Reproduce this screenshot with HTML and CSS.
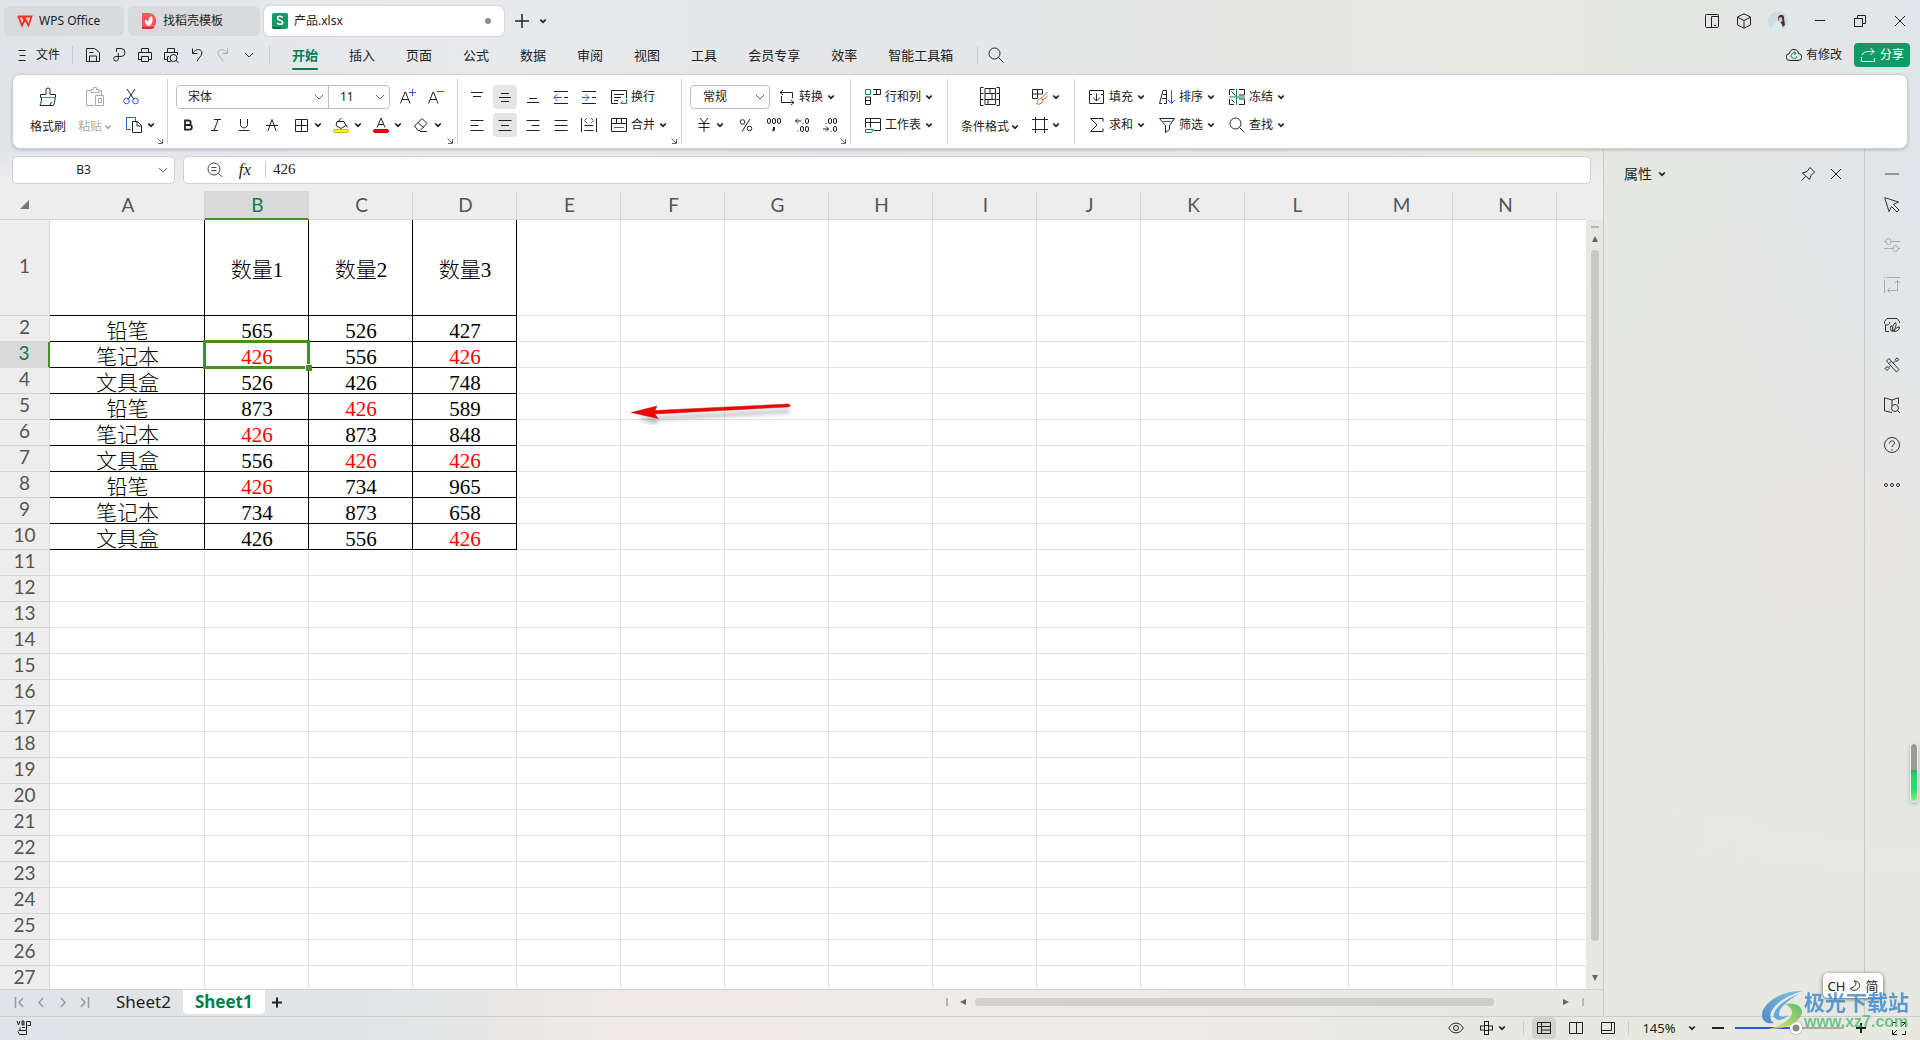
FILE: index.html
```html
<!DOCTYPE html>
<html lang="zh-CN">
<head>
<meta charset="utf-8">
<title>产品.xlsx - WPS Office</title>
<link rel="stylesheet" href="styles.css">
</head>
<body>
<svg class="defs" aria-hidden="true">
  <symbol id="chev" viewBox="0 0 8 8"><path d="M1.2 2.5 4 5.2 6.8 2.5" stroke-width="1.7"/></symbol>
  <symbol id="chev-thin" viewBox="0 0 10 10"><path d="M1 3l4 4 4-4"/></symbol>
  <symbol id="launch" viewBox="0 0 6 6"><path d="M.5.5 5 5M5.5 1v4.5H1"/></symbol>
  <symbol id="close" viewBox="0 0 16 16"><path d="M3 3l10 10M13 3 3 13"/></symbol>
  <symbol id="search" viewBox="0 0 16 16"><circle cx="6.5" cy="6.5" r="5.5"/><path d="m10.5 10.5 5 5"/></symbol>
</svg>

<header class="titlebar">
  <nav class="doc-tabs">
    <button class="doc-tab home"><svg class="i" viewBox="0 0 16 16"><path d="M.5 3.500H14.500L11.500 12.500 8 5.500 5 12.500 1.500 3.500M5.500 3.500 8.500 9" stroke="#f5321e" stroke-width="1.800"/></svg>WPS Office</button>
    <button class="doc-tab store"><svg class="i" viewBox="0 0 16 16"><path d="M1 0h7a7 7 0 0 1 7 7v2a7 7 0 0 1-7 7H1z" fill="#f35757" stroke="none"/><path d="M1 14h13l-3 2H1z" fill="#cf2f35" stroke="none"/><path d="M8 13C4 12 4 9 4 7c2 0 3 1 3.500 3C7 7 8 4 11 3c1 4 1 8-3 10z" fill="#fff" stroke="none"/></svg>找稻壳模板</button>
    <button class="doc-tab active"><svg class="i" viewBox="0 0 16 16"><rect width="16" height="16" rx="2" fill="#129a68" stroke="none"/><path d="M0 14h9v2H1z" fill="#0a6b45" stroke="none"/><path d="M10.800 4.500C9 2.500 5.500 3 5.500 5.200c0 2.600 5.200 1.500 5.200 4.200 0 2.200-3.700 2.600-5.600.6" stroke="#fff" stroke-width="1.600"/></svg><span class="name">产品.xlsx</span><span class="unsaved"></span></button>
    <button class="icon-btn new-tab" aria-label="新建"><svg class="i" viewBox="0 0 16 16"><path d="M8 1v14M1 8h14" stroke-width="1.500"/></svg></button>
    <button class="icon-btn tab-list" aria-label="标签列表"><svg class="c"><use href="#chev"/></svg></button>
  </nav>
  <div class="window-tools">
    <button class="icon-btn" aria-label="侧边"><svg class="i" viewBox="0 0 16 16"><rect x="1.500" y="1.500" width="13" height="13" rx="1"/><path d="M7.500 14.500v-11h7M10 12.500h2"/></svg></button>
    <button class="icon-btn" aria-label="应用"><svg class="i" viewBox="0 0 16 16"><path d="M8 .8 14.500 4v8L8 15.200 1.500 12V4zM2 4.500l6 3 6-3M8 7.500V15"/></svg></button>
    <button class="icon-btn avatar-btn" aria-label="账户"><svg class="avatar" viewBox="0 0 20 20"><circle cx="10" cy="10" r="10" fill="#cfdbe4"/><path d="M4 18c1-5 3-8 7-8l4 3-1 6a10 10 0 0 1-10-1z" fill="#dceaf0"/><path d="M10 6c2-3 6-3 6 1l1 7-2 2-2-4-3-3z" fill="#3c3540"/><path d="M10.500 7l3-1 1 4-3 2z" fill="#e9c5b5"/></svg></button>
    <button class="icon-btn win" aria-label="最小化"><svg class="i" viewBox="0 0 16 16"><path d="M3 7.500h10"/></svg></button>
    <button class="icon-btn win" aria-label="还原"><svg class="i" viewBox="0 0 16 16"><rect x="2.500" y="5.500" width="8" height="8"/><path d="M5.500 5.500v-3h8v8h-3"/></svg></button>
    <button class="icon-btn win" aria-label="关闭"><svg class="i"><use href="#close"/></svg></button>
  </div>
</header>

<div class="menubar">
  <button class="file-btn"><svg class="i" viewBox="0 0 16 16"><path d="M4.500 3.500h7M5.500 8.500h6M4.500 13.500h7"/></svg>文件</button>
  <span class="vsep"></span>
  <div class="quick">
    <button class="icon-btn" aria-label="保存"><svg class="i" viewBox="0 0 16 16"><path d="M1.500 1.500h8l5 4v9h-13zM4.500 14v-5h7v5M4.500 5.500h4"/></svg></button>
    <button class="icon-btn" aria-label="输出"><svg class="i" viewBox="0 0 16 16"><path d="M5.500 5V1.500h4.500a4 4 0 0 1 0 8H5a2.300 2.300 0 1 0 2.300 2.500V6"/></svg></button>
    <button class="icon-btn" aria-label="打印"><svg class="i" viewBox="0 0 16 16"><path d="M4.500 5V1.500h7V5M4 12.500H1.500v-7h13v7H12M4.500 9.500h7v5h-7z"/></svg></button>
    <button class="icon-btn" aria-label="打印预览"><svg class="i" viewBox="0 0 16 16"><path d="M4.500 5V1.500h7V5M4 12.500H1.500v-7h13V8M6 9.500H4.500v5H8"/><circle cx="10.500" cy="11" r="3.500"/><path d="m13 13.500 2.500 2"/></svg></button>
    <button class="icon-btn" aria-label="撤销"><svg class="i" viewBox="0 0 16 16"><path d="M3.500 1.500v5h5M4 6c3-5 9-4 9 0 0 3-4 5-5 8.500"/></svg></button>
    <button class="icon-btn dim" aria-label="恢复"><svg class="i" viewBox="0 0 16 16"><path d="M12.500 1.500v5h-5M12 6C9 1 3 2 3 6c0 3 4 5 5 8.500"/></svg></button>
    <button class="icon-btn more" aria-label="更多"><svg class="c10"><use href="#chev-thin"/></svg></button>
  </div>
  <span class="vsep"></span>
  <nav class="menu">
    <a href="#" class="on">开始</a><a href="#">插入</a><a href="#">页面</a><a href="#">公式</a><a href="#">数据</a><a href="#">审阅</a><a href="#">视图</a><a href="#">工具</a><a href="#">会员专享</a><a href="#">效率</a><a href="#">智能工具箱</a>
  </nav>
  <span class="vsep"></span>
  <button class="icon-btn find" aria-label="搜索"><svg class="i"><use href="#search"/></svg></button>
  <div class="share-area">
    <button class="plain"><svg class="i" viewBox="0 0 16 16"><path d="M4 13.500a3.500 3.500 0 0 1-.5-7C4 1 12 1 12.500 6.500a3.500 3.500 0 0 1-.5 7z"/><path d="M9.500 6.200A2.800 2.800 0 1 0 10.800 9M8.500 4.500l1.500 2-2 1" stroke="#0a8a55"/></svg>有修改</button>
    <button class="share"><svg class="i" viewBox="0 0 16 16"><path d="M1.500 10v4.500h13V11M2 8c1-3 5-4 12-3.500M10.500 1 14 4.500 10.500 8"/></svg>分享</button>
  </div>
</div>

<section class="ribbon">
  <div class="group clip">
    <button class="big"><svg class="i20" viewBox="0 0 20 20"><path d="M8 7.500V3a2 2 0 0 1 4 0v4.500h5.500v3h-15v-3zM3.500 11c0 3-.5 5-1.500 7.500h13.500c1-2 1.500-5 1.500-7.500M12 18l1.500-3"/><path d="M3 10.500h14" stroke="#d4622a"/></svg>格式刷</button>
    <button class="big dim"><svg class="i20" viewBox="0 0 20 20"><path d="M6 3.500H1.500v15H9M14 3.500h2.500V8M6 5.500v-3h2.500v-2h3v2H14v3zM10.500 8.500h8v10h-8zM13.500 11.500h3v4h-3z"/></svg><span class="lbl">粘贴<svg class="c"><use href="#chev"/></svg></span></button>
    <div class="rows">
      <button class="split solo" aria-label="剪切"><svg class="i" viewBox="0 0 16 16"><path d="M4 0l7 10.500M12 0 5 10.500"/><circle cx="3.500" cy="12" r="2.800" stroke="#2c5bdc"/><circle cx="12.500" cy="12" r="2.800" stroke="#2c5bdc"/></svg></button>
      <button class="split" aria-label="复制"><svg class="i" viewBox="0 0 16 16"><path d="M9.500 4V.5h-9v12H5" stroke="#2c5bdc"/><path d="M6.500 4.500h5l4 4v7h-9zM11 5v4h4"/></svg><svg class="c"><use href="#chev"/></svg></button>
    </div>
    <svg class="launch"><use href="#launch"/></svg>
  </div>

  <div class="group font">
    <div class="rows">
      <div class="row boxes">
        <div class="combo"><label><select class="font-name" aria-label="字体"><option>宋体</option></select><svg class="c10"><use href="#chev-thin"/></svg></label><label><select class="font-size" aria-label="字号"><option>11</option></select><svg class="c10"><use href="#chev-thin"/></svg></label></div>
        <button class="cell" aria-label="增大字号"><svg class="i" viewBox="0 0 16 16"><path d="M.5 14.500 5 3h.5L10 14.500M2 10.500h6.500"/><path d="M12.500 0v7M9 3.500h7" stroke="#2c5bdc"/></svg></button>
        <button class="cell" aria-label="减小字号"><svg class="i" viewBox="0 0 16 16"><path d="M.5 14.500 5 3h.5L10 14.500M2 10.500h6.500"/><path d="M9 2.500h7" stroke="#2c5bdc"/></svg></button>
      </div>
      <div class="row marks">
        <button class="cell" aria-label="加粗"><svg class="i" viewBox="0 0 16 16"><path d="M5 3.500h4a2.300 2.300 0 0 1 0 4.500H5zM5 8h4.500a2.300 2.300 0 0 1 0 4.700H5z" stroke-width="1.800"/></svg></button>
        <button class="cell" aria-label="倾斜"><svg class="i" viewBox="0 0 16 16"><path d="M6 2.500h7M3 13.500h7M10 3 6 13.500"/></svg></button>
        <button class="cell" aria-label="下划线"><svg class="i" viewBox="0 0 16 16"><path d="M4.500 2v5.500c0 4.500 7 4.500 7 0V2M3 13.500h10"/></svg></button>
        <button class="cell" aria-label="删除线"><svg class="i" viewBox="0 0 16 16"><path d="M4 14 8 2.500 12 14M2 8.500h12"/></svg></button>
        <button class="split" aria-label="边框"><svg class="i" viewBox="0 0 16 16"><path d="M2.500 2.500h12v12h-12zM8.500 2.500v12M2.500 8.500h12"/></svg><svg class="c"><use href="#chev"/></svg></button>
        <button class="split" aria-label="填充颜色"><svg class="i" viewBox="0 0 16 16"><path d="M5 4.500 8.500 1M4 4.500h7l2 4-5 3-5-3zM13 8l1.500 2.500" /><rect x=".5" y="12.500" width="15" height="3" rx="1.500" fill="#fffb00" stroke="#c6bd00"/></svg><svg class="c"><use href="#chev"/></svg></button>
        <button class="split" aria-label="字体颜色"><svg class="i" viewBox="0 0 16 16"><path d="M4 10.500 8 1l4 9.500M5.500 7.500h5"/><rect x=".5" y="12.500" width="15" height="3" rx="1.500" fill="#f00" stroke="#c80000"/></svg><svg class="c"><use href="#chev"/></svg></button>
        <button class="split" aria-label="清除"><svg class="i" viewBox="0 0 16 16"><path d="M1.500 9 9 1.500l5 5-7 7H5zM5 5.500l5.500 5M7 14.500h7"/></svg><svg class="c"><use href="#chev"/></svg></button>
      </div>
    </div>
    <svg class="launch"><use href="#launch"/></svg>
  </div>

  <div class="group align">
    <div class="rows">
      <div class="row">
        <button class="cell" aria-label="顶端对齐"><svg class="i" viewBox="0 0 16 16"><path d="M2 3.500h12M4 7.500h8"/></svg></button>
        <button class="cell" aria-label="垂直居中"><span class="pressed"><svg class="i" viewBox="0 0 16 16"><path d="M4 4.500h8M2 8.500h12M4 12.500h8"/></svg></span></button>
        <button class="cell" aria-label="底端对齐"><svg class="i" viewBox="0 0 16 16"><path d="M4 9.500h8M2 13.500h12"/></svg></button>
        <button class="cell" aria-label="减少缩进"><svg class="i" viewBox="0 0 16 16"><path d="M1 2.500h14M11 8.500h4M1 14.500h14"/><path d="M9 8.500H1M4.500 5 1 8.500 4.500 12" stroke="#2c5bdc"/></svg></button>
        <button class="cell" aria-label="增加缩进"><svg class="i" viewBox="0 0 16 16"><path d="M1 2.500h14M11 8.500h4M1 14.500h14"/><path d="M1 8.500h7M4.500 5 8 8.500 4.500 12" stroke="#2c5bdc"/></svg></button>
        <button class="text-btn"><svg class="i" viewBox="0 0 16 16"><path d="M15.500 9V1.500H.5v13H7M3 5.500h10M3 8.500h7M3 11.500h4"/><path d="M15.500 10v4.500H10M12 12l-2.500 2.500" stroke="#0a8a55"/></svg>换行</button>
      </div>
      <div class="row">
        <button class="cell" aria-label="左对齐"><svg class="i" viewBox="0 0 16 16"><path d="M1.500 3.500h13M1.500 8.500h8M1.500 13.500h13"/></svg></button>
        <button class="cell" aria-label="居中"><span class="pressed"><svg class="i" viewBox="0 0 16 16"><path d="M1.500 3.500h13M4 8.500h8M1.500 13.500h13"/></svg></span></button>
        <button class="cell" aria-label="右对齐"><svg class="i" viewBox="0 0 16 16"><path d="M1.500 3.500h13M6.500 8.500h8M1.500 13.500h13"/></svg></button>
        <button class="cell" aria-label="两端对齐"><svg class="i" viewBox="0 0 16 16"><path d="M1.500 3.500h13M1.500 8.500h13M1.500 13.500h13"/></svg></button>
        <button class="cell" aria-label="分散对齐"><svg class="i" viewBox="0 0 16 16"><path d="M.5 1v14M15.500 1v14M3.500 8.500h9M3.500 13.500h9"/><path d="M6 1 3.500 3.500 6 6M10 1l2.500 2.500L10 6" stroke="#2c5bdc"/></svg></button>
        <button class="text-btn"><svg class="i" viewBox="0 0 16 16"><path d="M.5 1.500h15v13H.5zM.5 6.500h15M5.500 1.500v5M10.500 1.500v5"/><path d="M3 10.500h10" stroke="#0a8a55"/></svg>合并<svg class="c"><use href="#chev"/></svg></button>
      </div>
    </div>
    <svg class="launch"><use href="#launch"/></svg>
  </div>

  <div class="group number">
    <div class="rows">
      <div class="row boxes">
        <div class="combo"><label><select class="num-format" aria-label="数字格式"><option>常规</option></select><svg class="c10"><use href="#chev-thin"/></svg></label></div>
        <button class="text-btn conv"><svg class="i" viewBox="0 0 16 16"><path d="M4 1 1 3.500 4 6M1 3.500h12.500V9M2.500 7v6.500H15M12 11l3 2.500-3 2.500"/></svg>转换<svg class="c"><use href="#chev"/></svg></button>
      </div>
      <div class="row">
        <button class="split yen" aria-label="货币"><svg class="i" viewBox="0 0 16 16"><path d="M4 1l4 5 4-5M2.500 6.500h11M2.500 10.500h11M8 6v9"/></svg><svg class="c"><use href="#chev"/></svg></button>
        <button class="cell" aria-label="百分比"><svg class="i" viewBox="0 0 16 16"><circle cx="4.500" cy="5" r="2.300"/><circle cx="11.500" cy="11.500" r="2.300"/><path d="M12 2 4 14.500"/></svg></button>
        <button class="cell" aria-label="千位分隔"><svg class="i" viewBox="0 0 16 16"><rect x="1.500" y="1.500" width="3" height="5" rx="1.500"/><rect x="6.500" y="1.500" width="3" height="5" rx="1.500"/><rect x="11.500" y="1.500" width="3" height="5" rx="1.500"/><path d="M8 10v2l-1 2" stroke-width="2"/></svg></button>
        <button class="cell" aria-label="增加小数"><svg class="i" viewBox="0 0 16 16"><path d="M7 4H1.500M4 1.500 1.500 4 4 6.500M9 6v1M4 13.500v1"/><rect x="11.500" y="1.500" width="3" height="5" rx="1.500"/><rect x="6.500" y="9.500" width="3" height="5" rx="1.500"/><rect x="11.500" y="9.500" width="3" height="5" rx="1.500"/></svg></button>
        <button class="cell" aria-label="减少小数"><svg class="i" viewBox="0 0 16 16"><path d="M1 12h5.500M4 9.500 6.500 12 4 14.500M4 6v1M9 13.500v1"/><rect x="6.500" y="1.500" width="3" height="5" rx="1.500"/><rect x="11.500" y="1.500" width="3" height="5" rx="1.500"/><rect x="11.500" y="9.500" width="3" height="5" rx="1.500"/></svg></button>
      </div>
    </div>
    <svg class="launch"><use href="#launch"/></svg>
  </div>

  <div class="group sheet-ops">
    <div class="rows">
      <button class="text-btn"><svg class="i" viewBox="0 0 16 16"><path d="M.5 .5h5v5h-5z" stroke="#0a8a55"/><path d="M8 .5h7.500v5H8M11.500.5v5M.5 8v7.500h5V8zM.5 11.500h5"/></svg>行和列<svg class="c"><use href="#chev"/></svg></button>
      <button class="text-btn"><svg class="i" viewBox="0 0 16 16"><path d="M9 13.500h6.500v-12H.5v9M.5 5.500h15M5.500 1.500v9"/><path d="M.5 12.500h8l-2 3h-6z" stroke="#0a8a55"/></svg>工作表<svg class="c"><use href="#chev"/></svg></button>
    </div>
  </div>

  <div class="group format">
    <button class="big wide"><svg class="i20" viewBox="0 0 20 20"><path d="M3.500.5h-3v18h3M16.500.5h3v18h-3M.5 6.500h3M.5 12.500h3M16.500 6.500h3M16.500 12.500h3M5 1.500h10.500v5H5zM5 6.500v6h10.500v-6M5 12.500v5h10.500v-5M10 1.500v5M12 6.500v6M8 12.500v5"/></svg><span class="lbl">条件格式<svg class="c"><use href="#chev"/></svg></span></button>
    <div class="rows">
      <button class="split" aria-label="表格样式"><svg class="i" viewBox="0 0 16 16"><path d="M10.500 5V.5H.5v9h5M.5 5h10M5.500.5v9"/><path d="M15.500 3 9 9.500M15.500 7l-5 4.500M5 15c0-4 2-5.500 4-5.500s2.500 2.500 1 4S7 15.500 5 15z" stroke="#d4622a"/></svg><svg class="c"><use href="#chev"/></svg></button>
      <button class="split" aria-label="单元格样式"><svg class="i" viewBox="0 0 16 16"><path d="M3.500 0v16M12.500 0v16M0 2.500h16M0 12.500h16"/></svg><svg class="c"><use href="#chev"/></svg></button>
    </div>
  </div>

  <div class="group edit">
    <div class="rows">
      <button class="text-btn"><svg class="i" viewBox="0 0 16 16"><path d="M.5 5.500v-4h14v4M3 5.500H.5v9h14v-9H12M7.500 4.500V12M4 8.500 7.500 12 11 8.500"/></svg>填充<svg class="c"><use href="#chev"/></svg></button>
      <button class="text-btn"><svg class="i" viewBox="0 0 16 16"><path d="M14 4.500v-3H1.500L8 8l-6.500 6.500H14v-3"/></svg>求和<svg class="c"><use href="#chev"/></svg></button>
    </div>
    <div class="rows">
      <button class="text-btn"><svg class="i" viewBox="0 0 16 16"><path d="M.5 14.500 4 1.500h3.500v13H5M3 9.500h4M4 5.500h3M.5 14.500H3"/><path d="M12.500 1v13M9 11l3.500 3.500L16 11" stroke="#2c5bdc"/></svg>排序<svg class="c"><use href="#chev"/></svg></button>
      <button class="text-btn"><svg class="i" viewBox="0 0 16 16"><path d="M.5 1.500h15l-5 7v4l-4 3v-7z"/><path d="M4 4.500h8" stroke="#0a8a55"/></svg>筛选<svg class="c"><use href="#chev"/></svg></button>
    </div>
    <div class="rows">
      <button class="text-btn"><svg class="i" viewBox="0 0 16 16"><path d="M5.500 .5H.5V6M.5 10v5.500H5M10 .5h5.500V6H10M10 10h5.500v5.500H10M2.500 2.500l4 4M2.500 10.500l3 3"/><path d="M7.500 0v16M0 8h16" stroke="#0a8a55"/></svg>冻结<svg class="c"><use href="#chev"/></svg></button>
      <button class="text-btn"><svg class="i"><use href="#search"/></svg>查找<svg class="c"><use href="#chev"/></svg></button>
    </div>
  </div>
</section>

<main class="workspace">
  <section class="book">
    <div class="formula-row">
      <div class="name-box"><input value="B3" aria-label="名称框"><svg class="c10"><use href="#chev-thin"/></svg></div>
      <div class="formula">
        <svg class="i" viewBox="0 0 16 16"><circle cx="7" cy="7" r="6"/><path d="m11.500 11.500 4 3.500M4.500 5.500h5M4.500 8.500h5"/></svg>
        <span class="fx">fx</span>
        <input value="426" aria-label="编辑栏">
      </div>
    </div>
    <div class="grid-area">
      <div class="grid-clip">
        <table class="grid">
          <colgroup id="cols"></colgroup>
          <thead><tr id="head"></tr></thead>
          <tbody id="body"></tbody>
        </table>
        <svg class="pointer" viewBox="0 0 170 24"><path d="M26 16 159 8.500v3L27 19l-2 4-20-6z" class="shade"/><path d="M0 11.500 26 5l-2 4.500L157 3c3 0 3 3 0 3L24 13l3 4.500z" fill="#f50000" stroke="#a02020" stroke-width=".5"/></svg>
      </div>
      <div class="vscroll"><span class="cap"></span><svg class="tri" viewBox="0 0 6 6"><path d="M3 0l3 6H0z"/></svg><span class="thumb"></span><svg class="tri" viewBox="0 0 6 6"><path d="M3 6 0 0h6z"/></svg></div>
    </div>
    <div class="sheetbar">
      <div class="steps">
        <button aria-label="第一张"><svg class="i" viewBox="0 0 16 16"><path d="M4.500 3v11M12 4 8 8.500l4 4.500" stroke-width="1.500"/></svg></button>
        <button aria-label="上一张"><svg class="i" viewBox="0 0 16 16"><path d="M10 4 6 8.500l4 4.500" stroke-width="1.500"/></svg></button>
        <button aria-label="下一张"><svg class="i" viewBox="0 0 16 16"><path d="M6 4l4 4.500L6 13" stroke-width="1.500"/></svg></button>
        <button aria-label="最后一张"><svg class="i" viewBox="0 0 16 16"><path d="M11.500 3v11M4 4l4 4.500L4 13" stroke-width="1.500"/></svg></button>
      </div>
      <button class="sheet">Sheet2</button>
      <button class="sheet current">Sheet1</button>
      <button class="add-sheet" aria-label="新建工作表"><svg class="i" viewBox="0 0 16 16"><path d="M8 3.500v10M3 8.500h10" stroke-width="2"/></svg></button>
      <div class="hscroll"><span class="cap"></span><svg class="tri" viewBox="0 0 6 6"><path d="M0 3l6-3v6z"/></svg><span class="thumb"></span><svg class="tri" viewBox="0 0 6 6"><path d="M6 3 0 0v6z"/></svg><span class="cap"></span></div>
    </div>
  </section>

  <aside class="panel">
    <button class="panel-title">属性<svg class="c"><use href="#chev"/></svg></button>
    <div class="panel-tools">
      <button class="icon-btn" aria-label="固定"><svg class="i" viewBox="0 0 16 16"><path d="M1.500 14.500 5.500 10.500M2.500 7l7 6.500 1.500-4 3.500-3.500-4.500-4.500L7 5.500z"/></svg></button>
      <button class="icon-btn" aria-label="关闭"><svg class="i"><use href="#close"/></svg></button>
    </div>
  </aside>

  <aside class="dock">
    <span class="grip"></span>
    <button aria-label="选择"><svg class="i" viewBox="0 0 16 16"><path d="M.7.7 14.500 5 9.500 7.500l5.500 5.500-2 2L7.500 9.500 5 14.500z"/></svg></button>
    <button class="dim" aria-label="属性"><svg class="i" viewBox="0 0 16 16"><ellipse cx="4.500" cy="4.500" rx="2.500" ry="3"/><ellipse cx="11.500" cy="11.500" rx="2.500" ry="3"/><path d="M0 4.500h2M7 4.500h9M0 11.500h9M14 11.500h2"/></svg></button>
    <button class="dim" aria-label="转置"><svg class="i" viewBox="0 0 16 16"><path d="M3 .5h13M.5 3v13M0 .5h1.500M13.500 14V4M11 6l2.500-2.500L16 6M13.500 13.500H4M6 11l-2.500 2.500L6 16"/></svg></button>
    <button aria-label="稻壳"><svg class="i" viewBox="0 0 16 16"><path d="M3 1.500h10l2.500 3V6M3 1.500.5 4.500v2c1 2 4 2 5 0V5M1.500 8v6.500H5M8 14.500c-2-2-2-4-1-6 2 1 2 4 1 6zM9 14.500c-1-4 0-7 2.500-9C13 8 11 12 9 14.500zM10 14.500c1-3 3-4.500 5.500-4.500 0 3-2.500 4.500-5.500 4.500z"/></svg></button>
    <button aria-label="美化"><svg class="i" viewBox="0 0 16 16"><path d="M2.500 4 5 1.500l10 11-2.500 2.500zM5 6.500l2.500-2.500M13 .8 14.800 2.500 13 4.500 11.200 2.500zM3 9.500 4.800 11.500 3 13.500 1 11.500zM11.500 4 9 6.500M4.500 10.500l2-1.500"/></svg></button>
    <button aria-label="查阅"><svg class="i" viewBox="0 0 16 16"><path d="M8 3v6M8 3 .5.800v13L8 15.500M8 3l6.500-2.200V7"/><circle cx="11" cy="11" r="3.500"/><path d="m13.500 13.500 2.500 2.500"/></svg></button>
    <button aria-label="帮助"><svg class="i" viewBox="0 0 16 16"><circle cx="8" cy="8" r="7.500"/><path d="M5.500 6.500c0-3.500 5-3.500 5-.5C10.500 8 8 8 8 10M8 12v1.500"/></svg></button>
    <button aria-label="更多"><svg class="i" viewBox="0 0 16 16"><circle cx="2" cy="8" r="1.500"/><circle cx="8" cy="8" r="1.500"/><circle cx="14" cy="8" r="1.500"/></svg></button>
  </aside>
</main>

<footer class="statusbar">
  <svg class="i vb" viewBox="0 0 16 16"><path d="M1 1l1.500 4 1.500-4M6 1v4h2V1zM6 3h2M10.500 10V1.500h4v4h-3M4 7.500v3h6.500v4h-7l-1.500-3M6 7.500h3M2.500 10.500H4"/></svg>
  <div class="views">
    <button class="icon-btn" aria-label="护眼"><svg class="i" viewBox="0 0 16 16"><path d="M.8 8C4 1.500 12 1.500 15.200 8 12 14.500 4 14.500.8 8z"/><circle cx="8" cy="8" r="2.500"/></svg></button>
    <button class="split" aria-label="阅读模式"><svg class="i" viewBox="0 0 16 16"><rect x="5.500" y="1.500" width="4" height="4"/><rect x="5.500" y="10.500" width="4" height="4"/><rect x="1.500" y="6" width="4" height="4"/><rect x="9.500" y="6" width="4" height="4"/></svg><svg class="c"><use href="#chev"/></svg></button>
    <span class="vsep"></span>
    <button class="view on" aria-label="普通视图"><svg class="i" viewBox="0 0 16 16"><path d="M1.500 2.500h13v11h-13zM1.500 6.500h13M5.500 2.500v11M5.500 10h9"/></svg></button>
    <button class="view" aria-label="分页预览"><svg class="i" viewBox="0 0 16 16"><path d="M1.500 2.500h13v11h-13zM8.500 2.500v11"/></svg></button>
    <button class="view" aria-label="页面布局"><svg class="i" viewBox="0 0 16 16"><path d="M1.500 2.500h13v11h-13zM11.500 2.500v8h-10"/></svg></button>
    <span class="vsep"></span>
    <button class="zoom-val">145%<svg class="c"><use href="#chev"/></svg></button>
    <button class="step" aria-label="缩小"><svg class="i" viewBox="0 0 16 16"><path d="M2 8h12" stroke-width="2"/></svg></button>
    <input class="zoom" type="range" min="0" max="100" value="57" aria-label="缩放">
    <button class="step" aria-label="放大"><svg class="i" viewBox="0 0 16 16"><path d="M3 8h10M8 3v10" stroke-width="2"/></svg></button>
    <button class="icon-btn full" aria-label="全屏"><svg class="i" viewBox="0 0 16 16"><path d="M10 2.500h4.500V7M14 3l-4 4M6 14.500H1.500V10M2 14l4-4M1.500 6V2.500H5M14.500 11v3.500H11"/></svg></button>
  </div>
</footer>

<div class="battery"></div>
<div class="ime">CH<svg class="moon" viewBox="0 0 12 12"><path d="M5 1c3 1 3 5.500-4 7.500 3 3 8 2 9.500-2C11 3 9 1 5 1z"/></svg>简</div>
<div class="brand">
  <svg viewBox="0 0 42 40"><defs><linearGradient id="bl" x1="0" y1="1" x2="1" y2="0"><stop offset="0" stop-color="#2f6fc0"/><stop offset="1" stop-color="#5cc0ee"/></linearGradient><linearGradient id="gr" x1="0" y1="1" x2="1" y2="0"><stop offset="0" stop-color="#e9e64a"/><stop offset="1" stop-color="#3cb45c"/></linearGradient></defs><path d="M41 1C20 0 0 14 1 26c1 7 7 8 12 7C5 28 8 12 41 1z" fill="url(#bl)"/><path d="M38 4C22 10 11 20 13 27c3 5 11 3 14-2-5 3-9 2-9-1 0-6 8-13 20-20z" fill="#4a9ad8"/><path d="M24 14c10-2 18 2 17 9-2 10-18 17-34 16 13-3 23-9 24-16 0-5-3-7-7-9z" fill="url(#gr)"/></svg>
  <div><strong>极光下载站</strong><span>www.xz7.com</span></div>
</div>
<script src="grid.js"></script>
</body>
</html>
```
FILE: grid.js
```js
const columns = 'ABCDEFGHIJKLMN'.split('').concat('');
const rows = [
  ['', '数量1', '数量2', '数量3'],
  ['铅笔', 565, 526, 427],
  ['笔记本', '426!', 556, '426!'],
  ['文具盒', 526, 426, 748],
  ['铅笔', 873, '426!', 589],
  ['笔记本', '426!', 873, 848],
  ['文具盒', 556, '426!', '426!'],
  ['铅笔', '426!', 734, 965],
  ['笔记本', 734, 873, 658],
  ['文具盒', 426, 556, '426!'],
];
const rowCount = 27;

document.getElementById('cols').innerHTML =
  '<col class="col-head"><col class="col-first">' + '<col class="col-std">'.repeat(columns.length - 1);

document.getElementById('head').innerHTML =
  '<td class="corner"><svg viewBox="0 0 9 9"><path d="M9 0v9H0z"/></svg></td>' +
  columns.map((c) => `<th scope="col"${c === 'B' ? ' class="picked"' : ''}>${c}</th>`).join('');

let html = '';
for (let r = 1; r <= rowCount; r++) {
  html += `<tr><th scope="row"${r === 3 ? ' class="picked"' : ''}>${r}</th>`;
  columns.forEach((c, i) => {
    const raw = rows[r - 1] && i < 4 ? String(rows[r - 1][i]) : null;
    const cls = [];
    if (raw !== null) cls.push('data');
    if (raw && raw.endsWith('!')) cls.push('hit');
    if (r === 3 && c === 'B') cls.push('active-cell');
    html += `<td${cls.length ? ` class="${cls.join(' ')}"` : ''}>${raw ? raw.replace('!', '') : ''}</td>`;
  });
  html += '</tr>';
}
document.getElementById('body').innerHTML = html;
```
FILE: styles.css
```css
* { box-sizing: border-box; }
html { height: 100%; overflow: hidden; }
body {
  margin: 0;
  height: 100%;
  display: flex;
  flex-direction: column;
  overflow: hidden;
  font: 12px/16px "Noto Sans", "Noto Sans CJK SC", sans-serif;
  color: #222;
  background:
    linear-gradient(90deg, #dfe4e8 0, #e2e5e7 20%, #efeae6 32%, #efebe7 58%, #e7e9e1 76%, #e7e9e1 100%) bottom / 100% 50px no-repeat,
    radial-gradient(ellipse 420px 340px at 96% 52%, #e8e6e4, transparent),
    linear-gradient(transparent 50%, #e7e9e1 85%),
    linear-gradient(90deg, #e0e4e9 0, #e8e9ec 24%, #e4e6ea 44%, #e8e9e2 80%, #e5e8e1 84%, #e4e6e4 90%, #e3e6e7 94%, #e0e5e9 100%);
}
button, input, select { font: inherit; color: inherit; border: 0; background: none; padding: 0; margin: 0; outline: 0; }
button { display: flex; align-items: center; justify-content: center; white-space: nowrap; }
svg { display: block; flex: none; fill: none; stroke: currentColor; }
.defs { position: absolute; width: 0; height: 0; }
.i { width: 16px; height: 16px; }
.i20 { width: 20px; height: 20px; }
.c { width: 8px; height: 8px; }
.c10 { width: 10px; height: 10px; color: #666; }
.dim { color: #a9abad; }
.icon-btn { width: 26px; height: 24px; }
.vsep { width: 1px; height: 18px; background: #c9cbce; }

/* title bar */
.titlebar { display: flex; justify-content: space-between; align-items: center; height: 40px; padding: 4px 0 2px 4px; }
.doc-tabs { display: flex; align-items: center; gap: 4px; }
.doc-tab { height: 30px; border-radius: 6px; background: #d8dade; justify-content: flex-start; gap: 6px; padding: 0 13px; }
.doc-tab.home { width: 120px; }
.doc-tab.store { width: 132px; }
.doc-tab.active { width: 240px; background: #fff; box-shadow: 0 0 2px #aaa; padding: 0 13px 0 8px; }
.doc-tab .name { flex: 1; text-align: left; }
.unsaved { width: 6px; height: 6px; border-radius: 3px; background: #8e8e8e; }
.new-tab { margin-left: 1px; }
.tab-list { width: 8px; }
.window-tools { display: flex; align-items: center; }
.window-tools .icon-btn { width: 32px; }
.window-tools .avatar-btn { width: 36px; margin-right: 4px; }
.window-tools .win { width: 40px; }
.avatar { width: 20px; height: 20px; stroke: none; }

/* menu bar */
.menubar { display: flex; align-items: center; height: 34px; padding: 0 10px 4px 14px; }
.file-btn { gap: 6px; width: 46px; margin-right: 12px; }
.quick { display: flex; padding: 0 7px; }
.more .c10 { color: #333; }
.menu { display: flex; gap: 31px; margin: 0 24px 0 22px; }
.menu a { position: relative; font-size: 13px; line-height: 30px; color: inherit; text-decoration: none; }
.menu .on { color: #00804d; font-weight: 700; }
.menu .on::after { content: ""; position: absolute; inset: auto 0 0; height: 2px; background: #00804d; border-radius: 1px; }
.find { margin-left: 5px; }
.share-area { display: flex; gap: 12px; margin-left: auto; }
.plain { gap: 4px; }
.share { width: 56px; height: 24px; border-radius: 4px; gap: 4px; background: #109a66; color: #fff; }

/* ribbon */
.ribbon { display: flex; height: 75px; margin: 0 12px; background: #fff; border: 1px solid #d0d2d4; border-radius: 8px; box-shadow: 0 1px 3px #0003; position: relative; }
.group { position: relative; display: flex; margin: 4px 0; padding-top: 6px; border-right: 1px solid #d4d4d4; }
.group:last-child { border: 0; }
.rows { display: grid; grid-template-rows: 24px 24px; row-gap: 4px; align-content: start; }
.row { display: flex; }
.launch { position: absolute; right: 4px; bottom: 0; width: 6px; height: 6px; color: #666; }
.cell { width: 28px; height: 24px; }
.split { width: 40px; height: 24px; gap: 5px; padding-left: 2px; }
.split.solo { width: 24px; padding: 0; }
.pressed { display: flex; align-items: center; justify-content: center; width: 24px; height: 24px; border-radius: 4px; background: #e5e5e5; }
.big { flex-direction: column; justify-content: space-between; height: 50px; padding-top: 2px; width: 50px; }
.lbl { display: flex; align-items: center; gap: 2px; }
.text-btn { height: 24px; gap: 4px; justify-content: flex-start; }
.clip { width: 155px; padding-left: 10px; }
.clip .rows { padding-left: 2px; }
.clip .dim { width: 44px; }
.font { width: 290px; padding-left: 6px; }
.font .boxes { padding-left: 2px; }
.combo { display: flex; height: 24px; border: 1px solid #bdbdbd; border-radius: 4px; margin-right: 4px; }
.combo label { position: relative; display: flex; align-items: center; }
.combo label + label { border-left: 1px solid #bdbdbd; }
.combo .c10 { position: absolute; right: 4px; pointer-events: none; }
.combo select { appearance: none; height: 22px; padding-left: 11px; }
.font-name { width: 151px; }
.font-size { width: 60px; }
.combo .num-format { width: 78px; padding-left: 12px; }
.align { width: 224px; padding-left: 5px; }
.align .text-btn { margin-left: 8px; }
.number { width: 169px; padding-left: 8px; }
.number .combo { margin-right: 9px; }
.yen { width: 42px; gap: 4px; padding: 0 2px 0 0; }
.sheet-ops { width: 97px; padding-left: 14px; }
.format { width: 127px; padding-left: 12px; }
.format .wide { width: 60px; }
.format .rows { padding-left: 6px; }
.format .split { gap: 4px; padding: 0; }
.edit { padding-left: 14px; gap: 14px; }

/* workspace */
.workspace { flex: 1; display: flex; min-height: 0; }
.book { flex: 1; min-width: 0; display: flex; flex-direction: column; border-right: 1px solid #cbccca; }
.formula-row { display: flex; gap: 8px; height: 42px; padding: 7px 12px; background: linear-gradient(#ededed00, #ededed 80%); }
.name-box, .formula { display: flex; align-items: center; height: 28px; background: #fff; border: 1px solid #cfd0d1; border-radius: 5px; }
.name-box { width: 163px; padding-right: 6px; }
.name-box input { flex: 1; min-width: 0; text-align: center; padding-right: 4px; }
.formula { flex: 1; padding-left: 23px; }
.fx { width: 43px; text-align: center; border-right: 1px solid #ccc; font: italic 17px/16px "Liberation Serif", serif; margin: 0 7px 0 0; padding-left: 2px; }
.formula .i { color: #444; }
.formula input { flex: 1; padding-bottom: 2px; font: 15px/20px "Liberation Serif", serif; }
.grid-area { flex: 1; min-height: 0; display: flex; border-bottom: 1px solid #cfd2d3; background: linear-gradient(#ededed 29px, transparent 29px); }
.grid-clip { position: relative; flex: 1; min-width: 0; overflow: hidden; background: #fff; }
.grid { table-layout: fixed; border-collapse: separate; border-spacing: 0; width: 1px; }
.col-head { width: 50px; }
.col-first { width: 155px; }
.col-std { width: 104px; }
.grid th, .corner { background: #ededed; border: 0 solid #d6d6d6; border-width: 0 1px 1px 0; color: #555; padding: 0 0 0 2px; font: 19px/20px Lato, sans-serif; }
.grid thead th, .corner { height: 29px; }
.grid tbody th { padding: 0 0 4px; }
.corner { border-right-color: #ededed !important; }
.corner svg { width: 9px; height: 9px; margin: 0 0 2px 20px; fill: #777; stroke: none; }
.grid td { height: 26px; padding: 5px 0 0 1px; border: 0 solid #e3e3e3; border-width: 0 1px 1px 0; text-align: center; font: 300 21px/20px "Liberation Serif", "Noto Sans CJK SC", serif; color: #000; white-space: nowrap; }
.grid td.corner { height: 29px; padding: 0; border-bottom-color: #d6d6d6; }
.grid tbody tr:first-child > * { height: 96px; }
.grid td.data { border-color: #000; }
.grid td.hit { color: #f00; }
.grid th.picked { background: #d9d9d9; color: #107c4c; }
.grid thead .picked { border-bottom: 2px solid #45911e; }
.grid tbody .picked { border-right: 2px solid #45911e; }
.active-cell { position: relative; }
.active-cell::before { content: ""; position: absolute; inset: -2px; border: 3px solid #45911e; }
.active-cell::after { content: ""; position: absolute; right: -4px; bottom: -4px; width: 6px; height: 6px; background: #45911e; border: solid #fff; border-width: 1px 0 0 1px; }
.pointer { position: absolute; left: 631px; top: 210px; width: 170px; height: 24px; stroke: none; }
.pointer .shade { fill: #5557; filter: blur(2px); }
.vscroll { width: 17px; padding: 35px 4px 8px 0; display: flex; flex-direction: column; align-items: flex-end; gap: 8px; }
.vscroll .thumb { flex: 1; width: 8px; border-radius: 4px; background: #c9cac6; margin-bottom: 26px; }
.tri { width: 6px; height: 6px; fill: #666; stroke: none; }
.vscroll .tri { margin-right: 1px; }
.vscroll .cap { width: 8px; height: 2px; background: #b8b9b5; }

.sheetbar { display: flex; align-items: center; height: 26px; padding-bottom: 2px; }
.steps { display: flex; gap: 6px; padding: 0 11px; color: #979b9e; }
.sheet { font-size: 17px; height: 24px; padding: 0 12px; }
.current { background: #fff; color: #00804d; font-weight: 700; border-radius: 0 0 5px 5px; }
.add-sheet { margin-left: 4px; }
.hscroll { display: flex; align-items: center; width: 638px; margin-left: auto; margin-right: 19px; }
.hscroll .cap { width: 2px; height: 8px; background: #b8b6b3; }
.hscroll .tri { margin: 0 9px 0 12px; }
.hscroll .thumb { width: 519px; height: 8px; border-radius: 4px; background: linear-gradient(90deg, #d4d0cd, #cccdc7); }
.hscroll .thumb + .tri { margin: 0 13px 0 auto; }

.panel { width: 260px; display: flex; justify-content: space-between; align-items: flex-start; padding: 13px 15px 0 20px; }
.panel-title { font-size: 14px; line-height: 24px; gap: 6px; }
.panel-tools { display: flex; gap: 2px; }
.dock { width: 56px; border-left: 1px solid #c9caca; display: flex; flex-direction: column; align-items: center; gap: 24px; padding: 24px 2px 0 0; color: #333; }
.grip { width: 14px; height: 2px; background: #999; }
.dock button { height: 16px; }
.dock .grip + button { margin-top: -2px; }

.statusbar { display: flex; align-items: center; justify-content: space-between; height: 24px; padding-bottom: 2px; border-top: 1px solid #cccccb; }
.vb { margin-left: 16px; }
.views { display: flex; align-items: center; }
.views .vsep { height: 14px; margin: 0 8px; }
.view { width: 24px; height: 22px; border-radius: 4px; margin-right: 8px; }
.view + .vsep { margin-left: 0 !important; }
.view.on { background: #d1d2cc; }
.views .split { width: 46px; padding: 0; gap: 3px; }
.zoom-val { gap: 12px; width: 64px; font-size: 13px; }
.step { width: 34px; }
.zoom { appearance: none; width: 109px; height: 14px; }
.zoom::-webkit-slider-runnable-track { height: 2px; background: linear-gradient(90deg, #2a55e0 57%, #aaa 57%); }
.zoom::-webkit-slider-thumb { appearance: none; width: 12px; height: 12px; margin-top: -5px; border-radius: 6px; background: radial-gradient(circle, #888 3px, #fff 4px); box-shadow: 0 0 2px #777; }
.full { width: 42px; }

/* overlays */
.battery { position: absolute; right: 2px; top: 743px; width: 8px; height: 59px; border: 1px solid #eee; border-radius: 4px; background: linear-gradient(#9a9a97 26px, #19b860 26px, #2ccf70 32px, #35d46f 44px, #7df07a); box-shadow: 0 2px 5px #0003; }
.ime { position: absolute; right: 37px; bottom: 42px; width: 60px; height: 25px; display: flex; align-items: center; justify-content: center; gap: 4px; background: #fff; border-radius: 5px; box-shadow: 0 1px 4px #0009; font-size: 13px; }
.moon { width: 12px; height: 12px; }
.brand { position: absolute; right: 11px; bottom: 10px; display: flex; align-items: center; gap: 1px; opacity: .8; }
.brand svg { width: 42px; height: 40px; stroke: none; }
.brand div { display: flex; flex-direction: column; }
.brand strong { font-size: 21px; line-height: 24px; color: #3c86cc; }
.brand span { font: 700 16px/16px "Liberation Sans", sans-serif; color: #4dba74; }
```
